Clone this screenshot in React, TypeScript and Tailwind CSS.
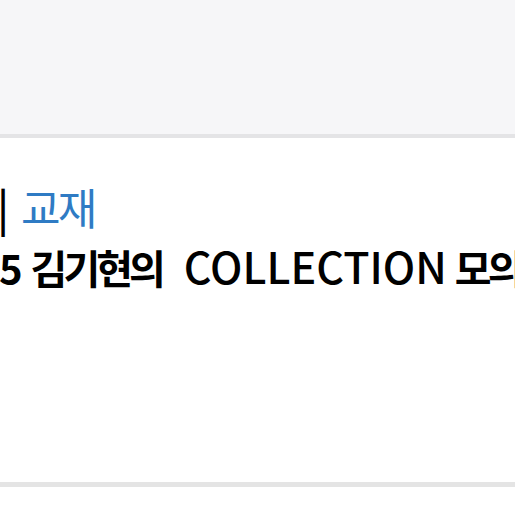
export default function App() {
  return (
    <div className="flex h-[515px] w-[515px] flex-col overflow-hidden bg-white font-['Noto_Sans_CJK_KR',sans-serif]">
      {/* Top area */}
      <div className="h-[138px] shrink-0 border-b-4 border-[#e4e4e6] bg-[#f6f6f8]" />

      {/* Title block */}
      <div className="flex h-[344px] shrink-0 flex-col overflow-hidden whitespace-nowrap pt-[38px]">
        <div className="flex items-baseline text-[43px] leading-[60px] text-black">
          <span className="-ml-[3px] font-medium">|</span>
          <span className="ml-[12px] tracking-[-3px] text-[#2f7bc4]">교재</span>
        </div>
        <div className="flex items-baseline text-[40px] font-bold leading-[58px] text-black">
          <span className="-ml-[1px]">5</span>
          <span className="ml-[8px] tracking-[-4px]">김기현의</span>
          <span className="ml-[22px] text-[43px] font-medium">COLLECTION</span>
          <span className="ml-[8px] tracking-[-4px]">모의고사</span>
        </div>
      </div>

      <div className="h-[5px] shrink-0 bg-[#e4e4e4]" />
      <div className="flex-1 bg-white" />
    </div>
  );
}
